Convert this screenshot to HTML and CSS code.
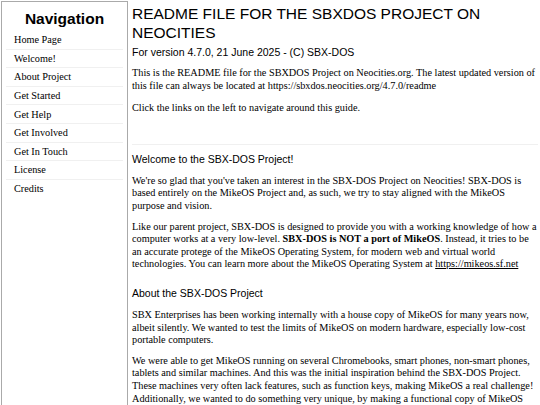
FILE: index.html
```html
<!DOCTYPE html>
<html>
<head>
  <title>SBX-DOS README</title>
  <link rel="stylesheet" href="styles.css">
</head>
<body>
  <div class="sidebar">
    <h2>Navigation</h2>
    <a href="#">Home Page</a>
    <a href="#welcome">Welcome!</a>
    <a href="#about">About Project</a>
    <a href="#">Get Started</a>
    <a href="#">Get Help</a>
    <a href="#">Get Involved</a>
    <a href="#">Get In Touch</a>
    <a href="#">License</a>
    <a href="#">Credits</a>
  </div>

  <div class="main">
    <div class="intro">
      <h1>README FILE FOR THE SBXDOS PROJECT ON NEOCITIES</h1>
      <div class="version">For version 4.7.0, 21 June 2025 - (C) SBX-DOS</div>
      <p>This is the README file for the SBXDOS Project on Neocities.org. The latest updated version of this file can always be located at https://sbxdos.neocities.org/4.7.0/readme</p>
      <p>Click the links on the left to navigate around this guide.</p>
    </div>

    <div class="section" id="welcome">
      <h3>Welcome to the SBX-DOS Project!</h3>
      <p>We're so glad that you've taken an interest in the SBX-DOS Project on Neocities! SBX-DOS is based entirely on the MikeOS Project and, as such, we try to stay aligned with the MikeOS purpose and vision.</p>
      <p>Like our parent project, SBX-DOS is designed to provide you with a working knowledge of how a computer works at a very low-level. <b>SBX-DOS is NOT a port of MikeOS</b>. Instead, it tries to be an accurate protege of the MikeOS Operating System, for modern web and virtual world technologies. You can learn more about the MikeOS Operating System at <a href="#">https://mikeos.sf.net</a></p>
    </div>

    <div class="section" id="about">
      <h3>About the SBX-DOS Project</h3>
      <p>SBX Enterprises has been working internally with a house copy of MikeOS for many years now, albeit silently. We wanted to test the limits of MikeOS on modern hardware, especially low-cost portable computers.</p>
      <p>We were able to get MikeOS running on several Chromebooks, smart phones, non-smart phones, tablets and similar machines. And this was the initial inspiration behind the SBX-DOS Project. These machines very often lack features, such as function keys, making MikeOS a real challenge! Additionally, we wanted to do something very unique, by making a functional copy of MikeOS available to everyone, right in the web browser.</p>
    </div>
  </div>
</body>
</html>
```

FILE: styles.css
```css
body {
  margin: 0;
  font-family: "Liberation Serif", "Times New Roman", serif;
  font-size: 10.25px;
  color: #000;
}

.sidebar {
  position: fixed;
  top: 1px;
  left: 1px;
  bottom: -2px;
  width: 125px;
  border: 1px solid #aaa;
  background: #fff;
}

.sidebar h2 {
  font-family: "Liberation Sans", Arial, sans-serif;
  font-size: 15.5px;
  line-height: 17px;
  text-align: center;
  margin: 8px 0 4px;
}

.sidebar a {
  display: block;
  margin: 0 4px;
  padding: 2.3px 8px;
  line-height: 13px;
  color: #000;
  text-decoration: none;
  border-bottom: 1px solid #f0f0f0;
}

.sidebar a:last-child {
  border-bottom: none;
}

.main {
  margin-left: 132px;
  padding-right: 2px;
}

h1 {
  font-family: "Liberation Sans", Arial, sans-serif;
  font-size: 15.5px;
  font-weight: normal;
  line-height: 19px;
  margin: 4px 0 0;
}

.version {
  font-family: "Liberation Sans", Arial, sans-serif;
  font-size: 10.5px;
  line-height: 13px;
  margin: 4px 0 0;
}

p {
  margin: 8px 0;
  line-height: 12.6px;
}

.intro {
  padding-bottom: 21px;
  border-bottom: 1px solid #f0f0f0;
}

.intro p:first-of-type {
  margin-top: 8px;
}

.intro p:last-child {
  margin-top: 10px;
}

.section {
  padding-top: 8px;
}

.section h3 {
  font-family: "Liberation Sans", Arial, sans-serif;
  font-size: 10.5px;
  font-weight: normal;
  line-height: 13px;
  margin: 0;
  padding: 0 0 1px;
}

.section a {
  color: #000;
}
```
